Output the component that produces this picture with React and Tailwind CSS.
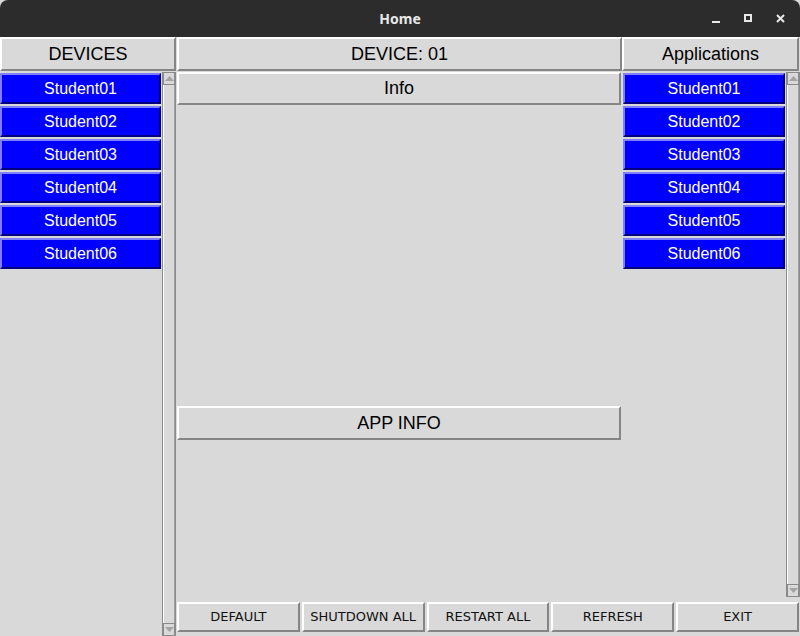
import React from "react";

const students = ["Student01", "Student02", "Student03", "Student04", "Student05", "Student06"];
const actions = ["DEFAULT", "SHUTDOWN ALL", "RESTART ALL", "REFRESH", "EXIT"];

const raised =
  "border-2 border-t-white border-l-white border-b-[#858585] border-r-[#858585]";

const StudentButton = ({ label, className = "" }) => (
  <div
    className={`my-px flex h-[31px] items-center justify-center border-2 border-t-[#8080ff] border-l-[#8080ff] border-b-[#00007f] border-r-[#00007f] bg-[#0000ff] text-[16px] text-white ${className}`}
  >
    {label}
  </div>
);

const Arrow = ({ down }) => (
  <div className="flex h-[13px] items-center justify-center border border-[#8a8a8a] bg-[#d9d9d9]">
    <svg width="9" height="5" viewBox="0 0 9 5">
      <polygon
        points={down ? "0,0 9,0 4.5,5" : "0,5 9,5 4.5,0"}
        fill="#a3a3a3"
      />
    </svg>
  </div>
);

const Scrollbar = ({ className = "" }) => (
  <div className={`flex w-[14px] flex-col border-x border-[#8a8a8a] ${className}`}>
    <Arrow />
    <div className="flex-1 border-l border-white border-r border-r-[#a0a0a0]" />
    <Arrow down />
  </div>
);

const Header = ({ children, className = "" }) => (
  <div
    className={`flex h-[34px] items-center justify-center bg-[#d9d9d9] text-[18px] text-black ${raised} ${className}`}
  >
    {children}
  </div>
);

export default function App() {
  return (
    <div
      className="flex h-[636px] w-[800px] flex-col overflow-hidden bg-[#d9d9d9]"
      style={{ fontFamily: '"Liberation Sans", Arial, sans-serif' }}
    >
      {/* title bar */}
      <div className="relative flex h-[37px] items-center justify-center rounded-t-[8px] bg-[#2c2c2c]">
        <span
          className="text-[14px] font-bold text-[#e8e8e8]"
          style={{ fontFamily: '"Noto Sans", sans-serif' }}
        >
          Home
        </span>
        <div className="absolute right-[15px] top-[13px] flex items-center gap-[24px]">
          <div className="mt-[8px] h-[2px] w-[8px] bg-[#e8e8e8]" />
          <div className="h-[8px] w-[8px] border-2 border-[#e8e8e8]" />
          <svg width="9" height="9" viewBox="0 0 9 9">
            <path d="M1 1 L8 8 M8 1 L1 8" stroke="#e8e8e8" strokeWidth="2" />
          </svg>
        </div>
      </div>

      <div className="flex flex-1">
        {/* left column */}
        <div className="flex w-[176px] flex-col">
          <Header>DEVICES</Header>
          <div className="flex flex-1">
            <div className="flex w-[162px] flex-col pt-px">
              {students.map((s) => (
                <StudentButton key={s} label={s} className="mr-px" />
              ))}
            </div>
            <Scrollbar className="mt-[1px]" />
          </div>
        </div>

        {/* center + right */}
        <div className="flex flex-1 flex-col">
          <div className="flex">
            <Header className="ml-[1px] w-[445px]">DEVICE: 01</Header>
            <Header className="w-[177px]">Applications</Header>
          </div>
          <div className="flex flex-1">
            <div className="flex w-[446px] flex-col">
              <div className={`m-px flex h-[33px] items-center justify-center text-[18px] ${raised}`}>
                Info
              </div>
              <div className="h-[299px]" />
              <div className={`m-px flex h-[34px] items-center justify-center text-[18px] ${raised}`}>
                APP INFO
              </div>
            </div>
            <div className="flex w-[178px]">
              <div className="flex w-[164px] flex-col pt-px">
                {students.map((s) => (
                  <StudentButton key={s} label={s} className="mx-px" />
                ))}
              </div>
              <Scrollbar className="mt-[1px] mb-[2px]" />
            </div>
          </div>
          <div
            className="mb-[4px] mt-[3px] flex gap-[2px] pl-[1px] pr-[1px]"
            style={{ fontFamily: '"DejaVu Sans", sans-serif' }}
          >
            {actions.map((a) => (
              <div
                key={a}
                className={`flex h-[30px] flex-1 items-center justify-center text-[13px] text-[#111] ${raised}`}
              >
                {a}
              </div>
            ))}
          </div>
        </div>
      </div>
    </div>
  );
}
